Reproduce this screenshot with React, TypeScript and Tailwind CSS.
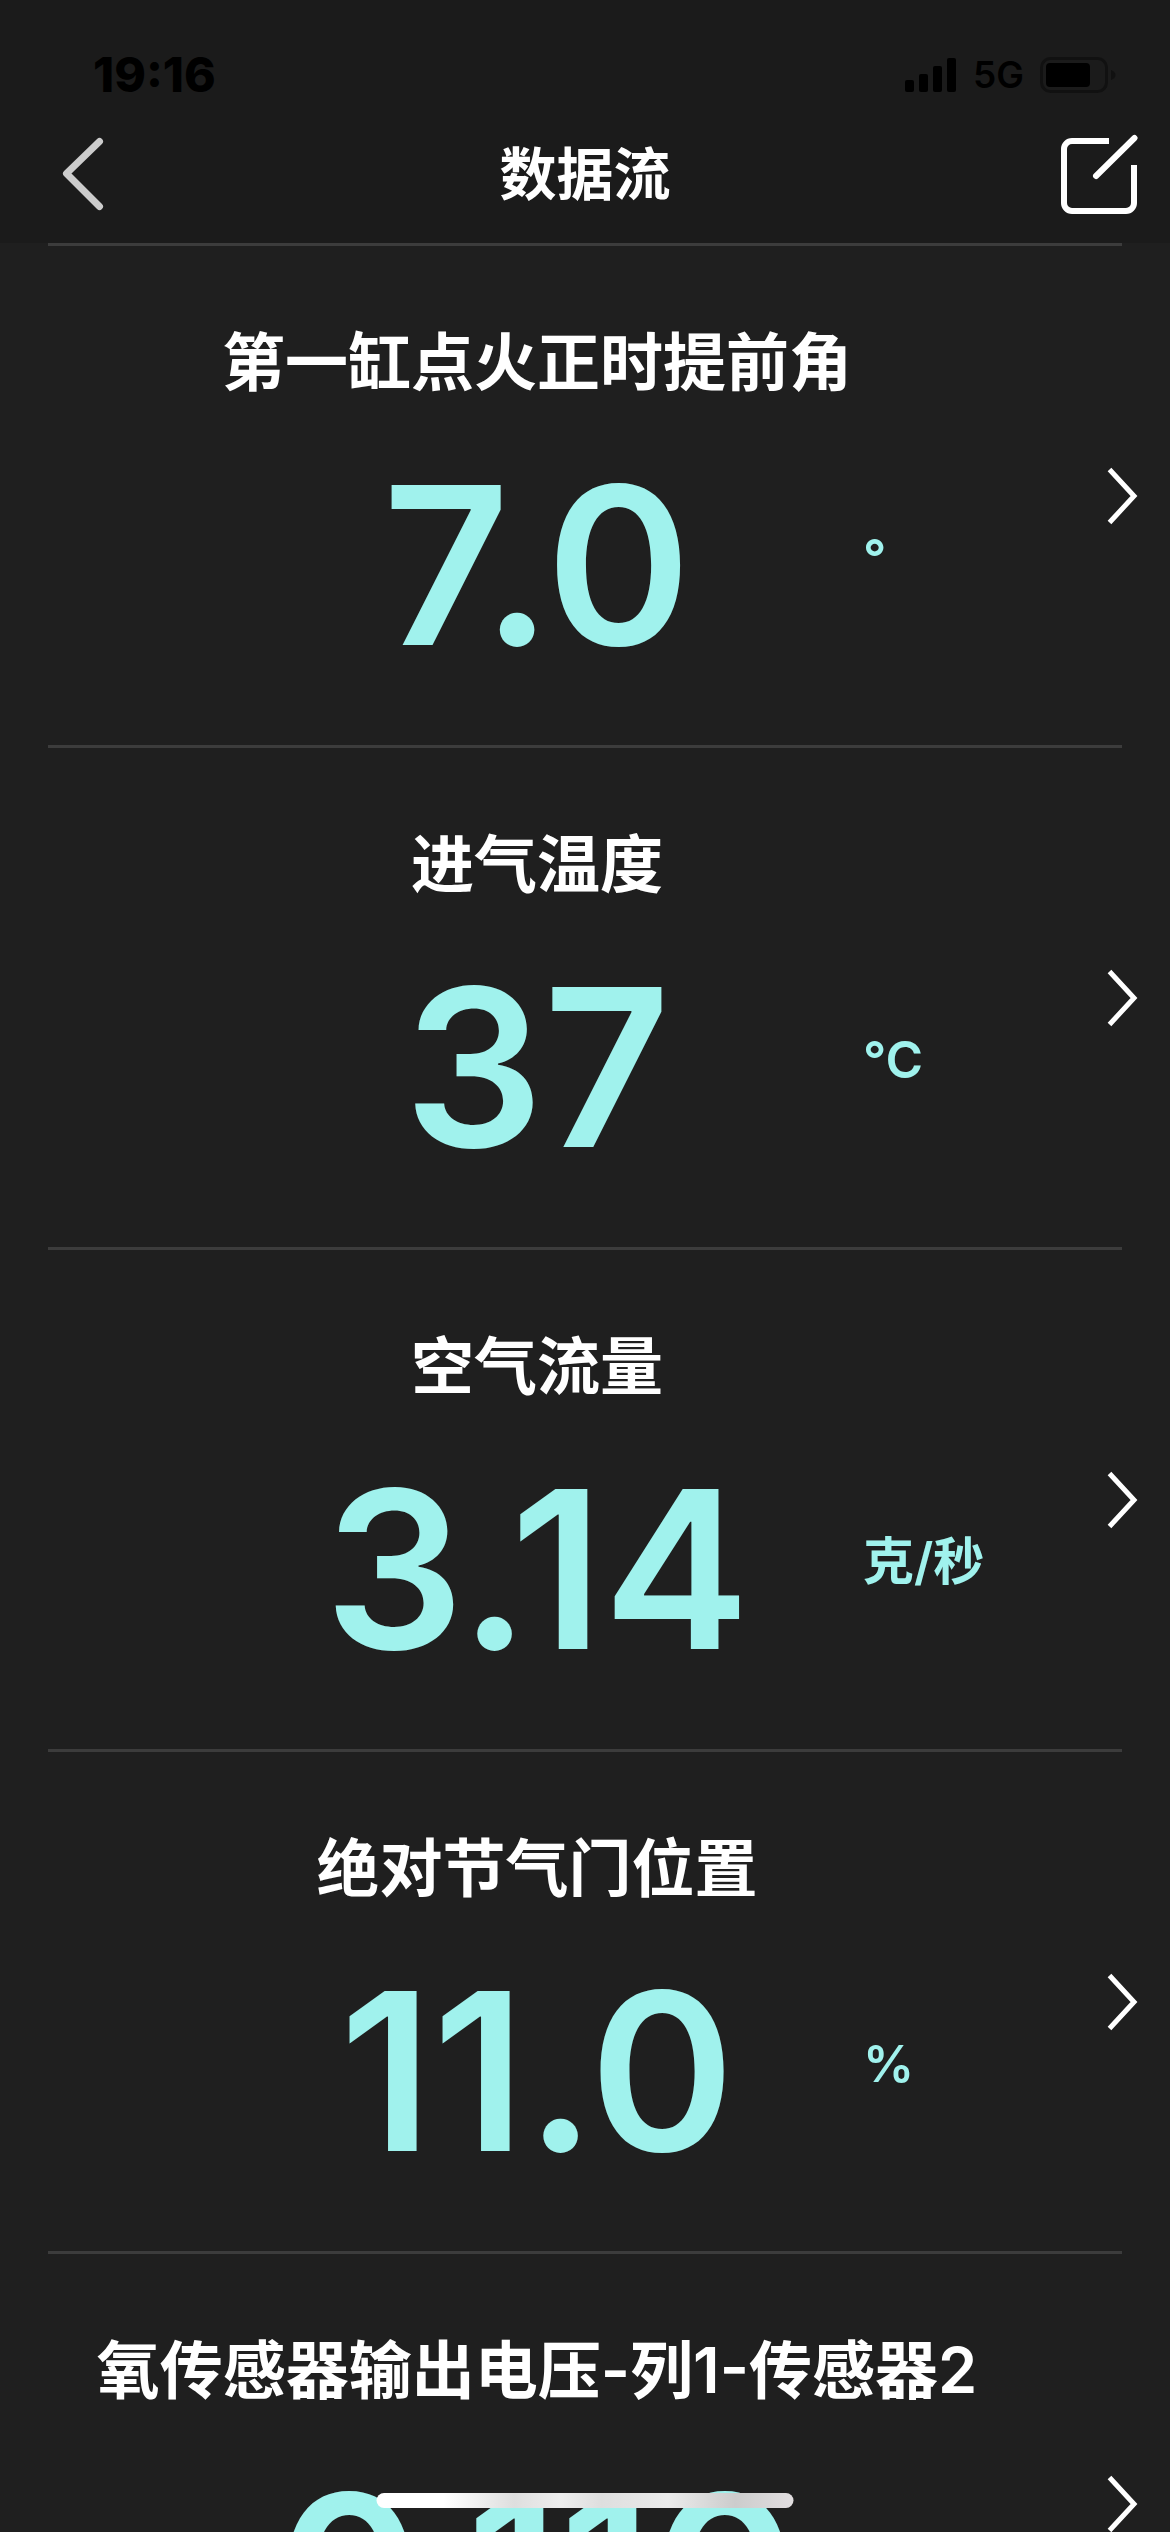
import React from 'react';

interface Reading {
  id: number;
  label: string;
  value: string;
  unit: string;
}

const readings: Reading[] = [
  { id: 1, label: '第一缸点火正时提前角', value: '7.0', unit: '°' },
  { id: 2, label: '进气温度', value: '37', unit: '°C' },
  { id: 3, label: '空气流量', value: '3.14', unit: '克/秒' },
  { id: 4, label: '绝对节气门位置', value: '11.0', unit: '%' },
  { id: 5, label: '氧传感器输出电压-列1-传感器2', value: '0.110', unit: '' },
];

const StatusBar = () => (
  <div className="flex h-[105px] items-center justify-between pt-11 pr-[54px] pl-[93px] text-black">
    <span className="text-[48px] leading-none font-extrabold">19:16</span>
    <div className="flex items-center gap-4">
      <svg width="52" height="36" viewBox="0 0 52 36" fill="currentColor" aria-hidden="true">
        <rect x="0" y="23" width="9" height="12" rx="2" />
        <rect x="14" y="17" width="9" height="18" rx="2" />
        <rect x="28" y="9" width="9" height="26" rx="2" />
        <rect x="42" y="1" width="9" height="34" rx="2" />
      </svg>
      <span className="text-[37px] leading-none font-semibold">5G</span>
      <svg width="76" height="36" viewBox="0 0 76 36" aria-hidden="true">
        <rect x="1.5" y="1.5" width="65" height="33" rx="9" fill="none" stroke="#111111" strokeWidth="3" />
        <rect x="6" y="6" width="44" height="24" rx="4" fill="currentColor" />
        <path d="M71 13c3 1 4.500 3 4.500 5s-1.500 4-4.500 5z" fill="#111111" />
      </svg>
    </div>
  </div>
);

const NavBar = () => (
  <nav className="flex h-[138px] items-center px-8">
    <div className="flex flex-1 justify-start">
      <button type="button" aria-label="返回" className="pl-[30px]">
        <svg width="42" height="76" viewBox="0 0 42 76" fill="none" stroke="#cccccc" strokeWidth="7" strokeLinecap="round" strokeLinejoin="round">
          <path d="M37.500 5.500L4.500 37.500L37.500 70.500" />
        </svg>
      </button>
    </div>
    <h1 className="text-[57px] leading-none font-semibold text-white">数据流</h1>
    <div className="flex flex-1 justify-end">
      <button type="button" aria-label="编辑">
        <svg width="78" height="80" viewBox="0 0 78 80" fill="none" stroke="#ffffff" strokeWidth="6">
          <path d="M49 7H12a8 8 0 0 0-8 8v54a8 8 0 0 0 8 8h54a8 8 0 0 0 8-8V31" />
          <path d="M36 42L74.500 4" strokeLinecap="round" />
        </svg>
      </button>
    </div>
  </nav>
);

const ReadingRow = ({ label, value, unit }: Omit<Reading, 'id'>) => (
  <li>
    <div className="mx-12 h-[3px] bg-[#3c3c3c]" />
    <button type="button" className="flex w-full items-center pr-8 pl-12">
      <div className="flex-1 pt-20 pb-[67px]">
        <p className="text-[63px] leading-[72px] font-semibold whitespace-nowrap text-white">{label}</p>
        <div className="mt-[55px] grid grid-cols-[1fr_4fr_1fr] items-center text-[#a0f2ed]">
          <span className="col-start-2 text-[220px] leading-[225px] font-semibold">{value}</span>
          <span className="pb-4 text-left text-[51px] leading-[60px] font-semibold whitespace-nowrap">{unit}</span>
        </div>
      </div>
      <div className="flex w-28 justify-end">
        <svg width="31" height="58" viewBox="0 0 31 58" fill="none" stroke="#ffffff" strokeWidth="5">
          <path d="M2.500 2.500L27 29L2.500 55.500" />
        </svg>
      </div>
    </button>
  </li>
);

export default function App() {
  return (
    <div className="relative flex h-screen flex-col overflow-hidden bg-[#1f1f1f] font-['Inter','Noto_Sans_CJK_SC',sans-serif]">
      <header className="shrink-0 bg-[#1b1b1b]">
        <StatusBar />
        <NavBar />
      </header>

      <main className="min-h-0 flex-1 overflow-hidden">
        <ul>
          {readings.map(({ id, ...reading }) => (
            <ReadingRow key={id} {...reading} />
          ))}
        </ul>
      </main>

      {/* Home indicator */}
      <div className="absolute bottom-6 left-1/2 h-[15px] w-[417px] -translate-x-1/2 rounded-full bg-[linear-gradient(90deg,#ffffff_16%,#dedede_33%,#eeeeee_44%,#dedede_54%,#ebebeb_70%,#cccccc_86%,#e2dee0_100%)]" />
    </div>
  );
}
